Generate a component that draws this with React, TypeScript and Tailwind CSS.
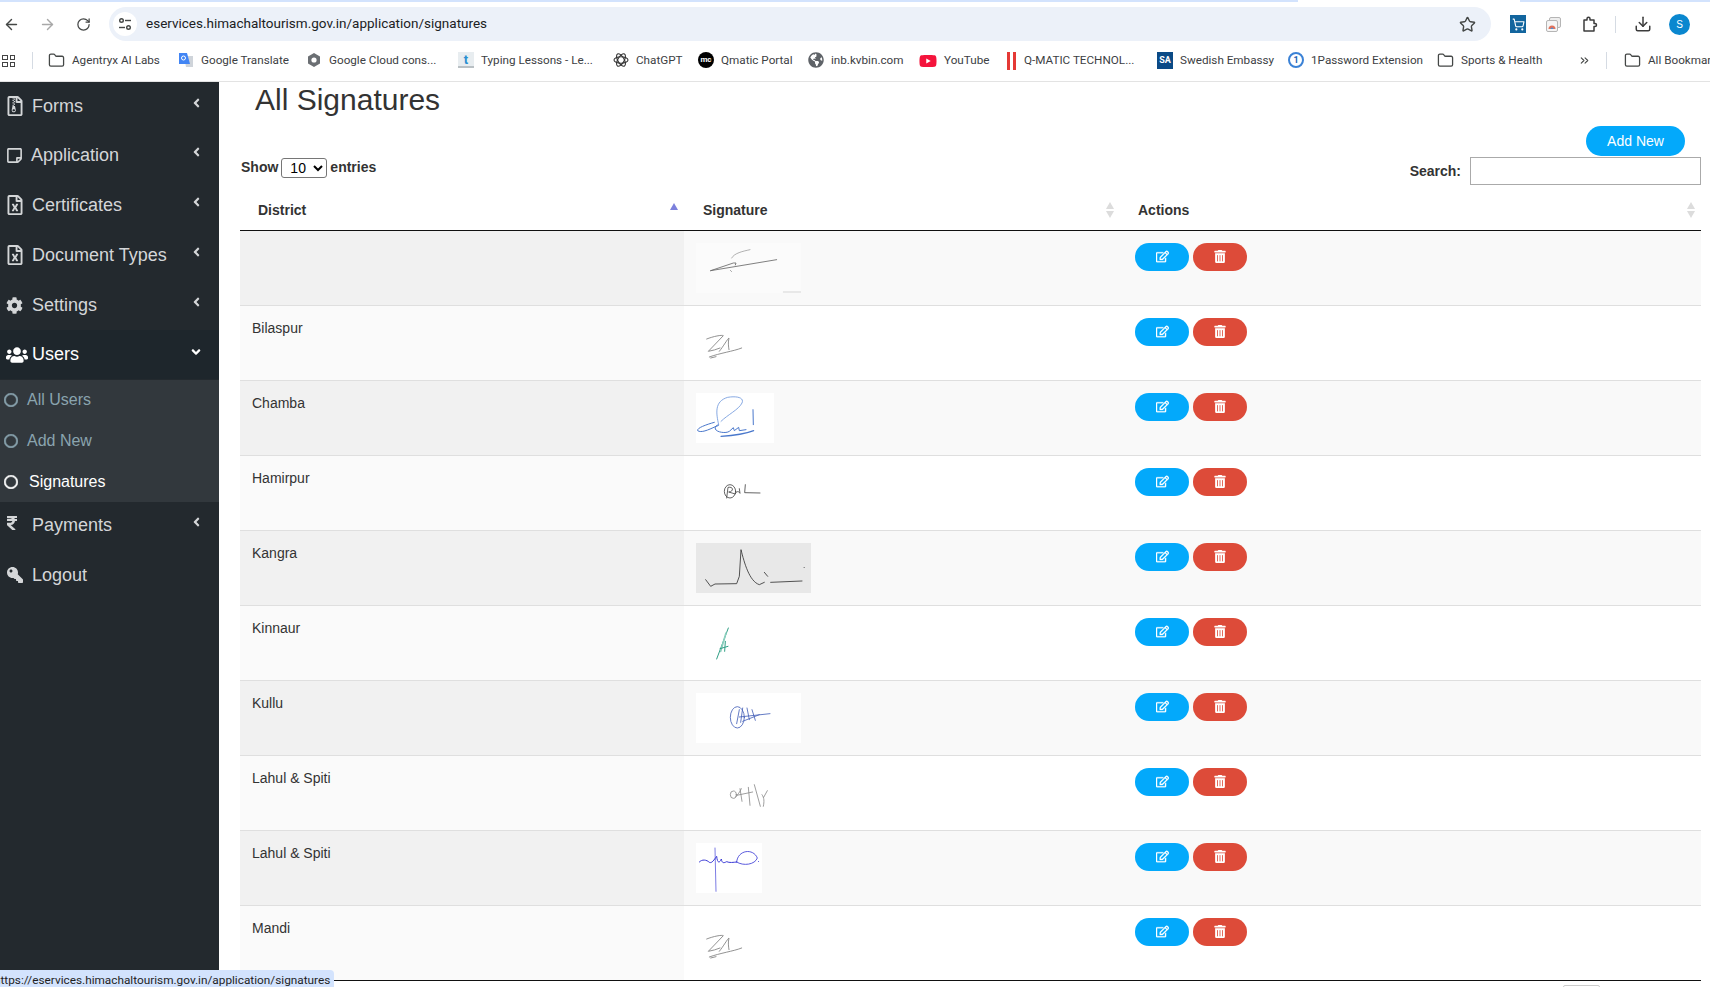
import type { ReactNode } from "react";
import { ArrowLeft, ArrowRight, ChevronsRight, Download, Folder, RotateCw, ShoppingCart, Star } from "lucide-react";
import {
  FaAngleDown,
  FaAngleLeft,
  FaCog,
  FaGlobeAmericas,
  FaKey,
  FaRegCircle,
  FaRegEdit,
  FaRegFileArchive,
  FaRegFileExcel,
  FaRegStickyNote,
  FaRupeeSign,
  FaTrashAlt,
  FaUsers,
  FaYoutube,
} from "react-icons/fa";

const folderIcon = <Folder className="w-[17px] h-[17px] text-[#444746]" strokeWidth={1.8} />;

const bookmarks: { label: string; width: string; icon: ReactNode }[] = [
  { label: "Agentryx AI Labs", width: "w-[130px]", icon: folderIcon },
  {
    label: "Google Translate",
    width: "w-[128px]",
    icon: (
      <svg viewBox="0 0 16 16" className="w-4 h-4">
        <path d="M6 4h9v11H8z" fill="#cfd4da" />
        <path d="M1 1h8l3 11H1z" fill="#4285f4" />
        <circle cx="5.5" cy="6" r="2" fill="none" stroke="#fff" strokeWidth="1" />
      </svg>
    ),
  },
  {
    label: "Google Cloud cons...",
    width: "w-[152px]",
    icon: (
      <svg viewBox="0 0 16 16" className="w-4 h-4">
        <path d="M8 1l6 3.500v7L8 15l-6-3.500v-7z" fill="#6b6f73" />
        <circle cx="8" cy="8" r="2.600" fill="#fff" />
      </svg>
    ),
  },
  {
    label: "Typing Lessons - Le...",
    width: "w-[155px]",
    icon: (
      <span className="w-4 h-4 flex items-center justify-center bg-[#e8edf0] border-b-2 border-[#b9c0c4] text-[#2a8fd0] text-[13px] font-bold leading-none">t</span>
    ),
  },
  {
    label: "ChatGPT",
    width: "w-[85px]",
    icon: (
      <svg viewBox="0 0 16 16" className="w-4 h-4" fill="none" stroke="#333" strokeWidth="1.100">
        <ellipse cx="8" cy="8" rx="7" ry="3.200" />
        <ellipse cx="8" cy="8" rx="7" ry="3.200" transform="rotate(60 8 8)" />
        <ellipse cx="8" cy="8" rx="7" ry="3.200" transform="rotate(120 8 8)" />
      </svg>
    ),
  },
  {
    label: "Qmatic Portal",
    width: "w-[110px]",
    icon: (
      <span className="w-4 h-4 rounded-full bg-black text-white text-[8px] font-bold flex items-center justify-center leading-none">mc</span>
    ),
  },
  { label: "inb.kvbin.com", width: "w-[111px]", icon: <FaGlobeAmericas className="w-4 h-4 text-[#5f6368]" /> },
  { label: "YouTube", width: "w-[86px]", icon: <FaYoutube className="w-[18px] h-[18px] text-[#f4143c]" /> },
  {
    label: "Q-MATIC TECHNOL...",
    width: "w-[152px]",
    icon: (
      <span className="w-3 h-[18px] flex justify-center gap-[3px]">
        <span className="w-[3px] bg-[#e53935]" />
        <span className="w-[3px] bg-[#e53935]" />
      </span>
    ),
  },
  {
    label: "Swedish Embassy",
    width: "w-[131px]",
    icon: <span className="w-4 h-[17px] bg-[#0b4a86] text-white text-[9px] font-bold flex items-center justify-center leading-none">SA</span>,
  },
  {
    label: "1Password Extension",
    width: "w-[149px]",
    icon: (
      <span className="w-4 h-4 rounded-full border-2 border-[#3b82d6] text-[#1a5fb4] text-[9px] font-bold flex items-center justify-center leading-none">1</span>
    ),
  },
  { label: "Sports & Health", width: "w-[141px]", icon: folderIcon },
];

function ChromeBar() {
  return (
    <header className="shrink-0 h-[82px] bg-white border-b border-[#e3e3e3] text-[#1f1f1f]">
      <div className="flex h-[2px] bg-white">
        <div className="w-[1298px] bg-[#d3e3fd]" />
        <div className="w-[222px]" />
        <div className="flex-1 bg-[#d3e3fd]" />
      </div>
      <div className="flex items-center h-[34px] mt-[5px]">
        <ArrowLeft className="w-[17px] h-[17px] ml-[3px] text-[#444746]" />
        <ArrowRight className="w-[17px] h-[17px] ml-[19px] text-[#a8a8a8]" />
        <RotateCw className="w-[15px] h-[15px] ml-[20px] text-[#444746]" />
        <div className="flex items-center flex-1 h-[34px] ml-[18px] bg-[#ecf1f9] rounded-full">
          <div className="w-6 h-6 ml-[4px] rounded-full bg-white flex items-center justify-center">
            <svg viewBox="0 0 14 14" className="w-[14px] h-[14px]" fill="none" stroke="#444746" strokeWidth="1.400">
              <circle cx="3.500" cy="3.500" r="1.800" />
              <path d="M7 3.500h6" />
              <circle cx="10.500" cy="10.500" r="1.800" />
              <path d="M1 10.500h6" />
            </svg>
          </div>
          <span className="ml-[9px] text-[13.500px] leading-none font-['Roboto',sans-serif] text-[#202124]">eservices.himachaltourism.gov.in/application/signatures</span>
          <Star className="w-[17px] h-[17px] ml-auto mr-[15px] text-[#444746]" />
        </div>
        <div className="ml-[19px] w-4 h-[18px] bg-[#12659e] flex items-center justify-center">
          <ShoppingCart className="w-[13px] h-[13px] text-white" />
        </div>
        <svg viewBox="0 0 17 17" className="w-[17px] h-[17px] ml-[19px]">
          <rect x="4.500" y="1.500" width="11" height="10" rx="1.500" fill="#eee" stroke="#b5b5b5" />
          <rect x="1.500" y="4.500" width="11" height="11" rx="1.500" fill="#f5f5f5" stroke="#b5b5b5" />
          <path d="M3.500 13a3.500 3.500 0 0 1 7 0z" fill="#e2725b" />
          <path d="M5.500 13a1.500 1.500 0 0 1 3 0z" fill="#4a90d9" />
        </svg>
        <svg viewBox="0 0 17 17" className="w-[17px] h-[17px] ml-[19px]" fill="none" stroke="#3c3c3c" strokeWidth="1.500" strokeLinejoin="round">
          <path d="M3 4h3V2.800a1.500 1.500 0 0 1 3 0V4h4v3.500h1a1.500 1.500 0 0 1 0 3h-1V15H3z" />
        </svg>
        <div className="w-px h-[17px] ml-[17px] bg-[#d5dbe3]" />
        <Download className="w-[18px] h-[18px] ml-[18px] text-[#3c3c3c]" />
        <div className="w-[21px] h-[21px] ml-[17px] mr-[20px] rounded-full bg-[#0a87cf] text-white text-[10px] flex items-center justify-center">S</div>
      </div>
      <div className="flex items-center h-[33px] mt-[3px] text-[11.700px] text-[#3c4043] overflow-hidden whitespace-nowrap font-['Roboto',sans-serif]">
        <div className="shrink-0 ml-[2px] w-[13px] grid grid-cols-2 gap-[2px]">
          <span className="h-[5px] border border-[#444]" />
          <span className="h-[5px] border border-[#444]" />
          <span className="h-[5px] border border-[#444]" />
          <span className="h-[5px] border border-[#444]" />
        </div>
        <div className="shrink-0 w-px h-[17px] ml-[17px] mr-[15px] bg-[#d5dbe3]" />
        {bookmarks.map((b) => (
          <div key={b.label} className={`${b.width} shrink-0 flex items-center gap-[7px]`}>
            {b.icon}
            <span>{b.label}</span>
          </div>
        ))}
        <ChevronsRight className="w-[13px] h-[13px] shrink-0 text-[#444746]" />
        <div className="w-px h-[17px] shrink-0 ml-[15px] mr-[17px] bg-[#d5dbe3]" />
        <div className="flex items-center gap-[7px] shrink-0">
          {folderIcon}
          <span>All Bookmarks</span>
        </div>
      </div>
    </header>
  );
}

function NavItem({ icon, label, height, gap, open }: { icon: ReactNode; label: string; height: string; gap: string; open?: boolean }) {
  return (
    <div className={`flex items-center ${height} pl-[6px] pr-[16px] ${open ? "bg-[#1e262c] text-white" : "text-[#d4d6d8]"} text-[18px]`}>
      <span className={`w-[17px] flex justify-center ${gap}`}>{icon}</span>
      <span>{label}</span>
      {open ? <FaAngleDown className="ml-auto mb-[6px] w-[14px] h-[14px]" /> : label === "Logout" ? null : <FaAngleLeft className="ml-auto mb-[7px] w-[13px] h-[14px]" />}
    </div>
  );
}

function SubItem({ label, active }: { label: string; active?: boolean }) {
  return (
    <div className={`flex items-center h-[40.670px] pl-[4px] text-[16px] ${active ? "text-white" : "text-[#8aa4af]"}`}>
      <FaRegCircle className="w-[14px] h-[14px] stroke-current stroke-[24]" />
      <span className={active ? "ml-[11px]" : "ml-[9px]"}>{label}</span>
    </div>
  );
}

function Sidebar() {
  return (
    <aside className="w-[219px] shrink-0 bg-[#23292e]">
      <NavItem icon={<FaRegFileArchive className="w-[16px] h-[20px]" />} label="Forms" height="h-[48px]" gap="mr-[9px]" />
      <NavItem icon={<FaRegStickyNote className="w-[17px] h-[17px]" />} label="Application" height="h-[50px]" gap="mr-[8px]" />
      <NavItem icon={<FaRegFileExcel className="w-[16px] h-[20px]" />} label="Certificates" height="h-[50px]" gap="mr-[9px]" />
      <NavItem icon={<FaRegFileExcel className="w-[16px] h-[20px]" />} label="Document Types" height="h-[50px]" gap="mr-[9px]" />
      <NavItem icon={<FaCog className="w-[17px] h-[17px]" />} label="Settings" height="h-[50px]" gap="mr-[9px]" />
      <NavItem icon={<FaUsers className="w-[22px] h-[22px] shrink-0 translate-x-[2px]" />} label="Users" height="h-[49px]" gap="mr-[9px]" open />
      <div className="mt-px bg-[#32383d]">
        <SubItem label="All Users" />
        <SubItem label="Add New" />
        <SubItem label="Signatures" active />
      </div>
      <NavItem icon={<FaRupeeSign className="w-[14px] h-[16px] mb-[6px] -translate-x-[3px]" />} label="Payments" height="h-[48px]" gap="mr-[9px]" />
      <NavItem icon={<FaKey className="w-[16px] h-[16px] -scale-x-100" />} label="Logout" height="h-[51px]" gap="mr-[9px]" />
    </aside>
  );
}

function ZSign() {
  return (
    <svg viewBox="0 0 150 150" className="block w-[50px] h-[50px] blur-[0.3px]" fill="none" stroke="#7c7c7c" strokeWidth="2.500" strokeLinecap="round">
      <path d="M32 63C52 55 78 50 82 53L37 100C50 98 62 94 72 90" />
      <path d="M70 100C82 85 95 62 99 60C96 72 97 85 99 95" />
      <path d="M40 117C72 105 112 100 137 90" />
      <path d="M44 120L60 116" />
    </svg>
  );
}

function Signature({ id }: { id: number }) {
  if (id === 0)
    return (
      <svg viewBox="0 0 315 150" className="block w-[105px] h-[50px] bg-[#fbfbfb] blur-[0.3px]" fill="none" stroke="#666" strokeWidth="2.500" strokeLinecap="round">
        <path d="M44 83L242 50" />
        <path d="M44 83L112 60L120 60L118 66" />
        <path d="M107 45C115 30 140 25 162 20" strokeWidth="1.500" />
        <path d="M104 83L106 85" />
        <path d="M262 147L315 147" stroke="#ccc" />
      </svg>
    );
  if (id === 2)
    return (
      <svg viewBox="0 0 234 150" className="block w-[78px] h-[50px] bg-white blur-[0.3px]" fill="none" stroke="#4a78cc" strokeWidth="3" strokeLinecap="round" strokeLinejoin="round">
        <path d="M68 95C60 60 55 25 95 13C125 8 145 15 138 30C128 50 95 65 75 85" strokeWidth="2.500" stroke="#6f98dc" />
        <path d="M55 88C30 95 2 105 5 113C15 120 35 112 60 100C80 95 55 92 58 108C62 118 90 122 100 115L112 104L115 113L128 103L130 113L150 110" />
        <path d="M171 50L172 95" />
        <path d="M75 130C110 128 150 122 173 113" strokeWidth="3.500" />
      </svg>
    );
  if (id === 3)
    return (
      <svg viewBox="0 0 234 150" className="block w-[78px] h-[50px] blur-[0.3px]" fill="none" stroke="#444" strokeWidth="2.500" strokeLinecap="round">
        <ellipse cx="102" cy="70" rx="17" ry="20" />
        <path d="M92 90L96 58C115 55 112 72 98 72L118 78C120 70 128 68 132 76L130 62" />
        <path d="M148 50L146 74L192 75" />
      </svg>
    );
  if (id === 4)
    return (
      <svg viewBox="0 0 345 150" className="block w-[115px] h-[50px] bg-[#e8e8e8] blur-[0.3px]" fill="none" stroke="#333" strokeWidth="2.500" strokeLinecap="round">
        <path d="M29 110L44 130L57 123L122 122L130 100L135 20C145 60 160 115 190 125L205 118" />
        <path d="M205 88L215 100" />
        <path d="M224 118L318 114" />
        <path d="M324 73L325 74" />
      </svg>
    );
  if (id === 5)
    return (
      <svg viewBox="0 0 150 150" className="block w-[50px] h-[50px] blur-[0.3px]" fill="none" stroke="#2f9e84" strokeWidth="3" strokeLinecap="round">
        <path d="M97 30L62 123" />
        <path d="M90 45L74 100" strokeWidth="5" stroke="#8ccfbe" />
        <path d="M72 92L96 85" />
        <path d="M88 70L86 100" />
      </svg>
    );
  if (id === 6)
    return (
      <svg viewBox="0 0 315 150" className="block w-[105px] h-[50px] bg-white blur-[0.3px]" fill="none" stroke="#4560b8" strokeWidth="2.500" strokeLinecap="round">
        <ellipse cx="124" cy="73" rx="21" ry="32" />
        <path d="M130 72L222 62" />
        <path d="M130 50L122 92" />
        <path d="M140 45L134 88" />
        <path d="M153 45L160 80" />
        <path d="M168 50L178 82" />
        <path d="M140 85L190 65" />
      </svg>
    );
  if (id === 7)
    return (
      <svg viewBox="0 0 234 150" className="block w-[78px] h-[50px] blur-[0.3px]" fill="none" stroke="#8a8a8a" strokeWidth="2.500" strokeLinecap="round">
        <ellipse cx="112" cy="80" rx="9" ry="11" />
        <path d="M118 88C125 80 132 72 136 62" />
        <path d="M132 62L138 100" />
        <path d="M122 82L170 72" />
        <path d="M157 58L162 112" />
        <path d="M175 50L193 115" />
        <path d="M198 80C205 90 205 100 202 115" />
        <path d="M203 88L214 68" />
      </svg>
    );
  if (id === 8)
    return (
      <svg viewBox="0 0 198 150" className="block w-[66px] h-[50px] bg-white blur-[0.3px]" fill="none" stroke="#3a3ad6" strokeWidth="2.500" strokeLinecap="round" strokeLinejoin="round">
        <path d="M57 15L60 145" strokeWidth="2" />
        <path d="M10 57C18 48 32 50 40 58C48 62 54 50 62 40C64 60 70 62 76 48C78 62 84 60 92 56C100 60 112 58 122 57" strokeWidth="3" />
        <path d="M122 57C125 20 172 15 184 45C177 65 142 70 122 57" />
        <path d="M187 55L188 56" />
      </svg>
    );
  return <ZSign />;
}

const rows = ["", "Bilaspur", "Chamba", "Hamirpur", "Kangra", "Kinnaur", "Kullu", "Lahul & Spiti", "Lahul & Spiti", "Mandi"];

function SortArrows() {
  return (
    <span className="flex flex-col gap-[2px]">
      <span className="w-0 h-0 border-x-[4px] border-x-transparent border-b-[7px] border-b-[#dcdcdc]" />
      <span className="w-0 h-0 border-x-[4px] border-x-transparent border-t-[7px] border-t-[#dcdcdc]" />
    </span>
  );
}

function SignatureTable() {
  return (
    <table className="w-[1461px] table-fixed border-separate border-spacing-0 text-[14px] text-[#333]">
      <colgroup>
        <col className="w-[444px]" />
        <col className="w-[441px]" />
        <col className="w-[576px]" />
      </colgroup>
      <thead>
        <tr>
          <th className="h-[41px] pl-[18px] pr-[5px] text-left font-bold border-b border-[#111]">
            <div className="flex items-center justify-between">
              <span>District</span>
              <span className="w-0 h-0 mb-[8px] mr-px border-x-[4.500px] border-x-transparent border-b-[7px] border-b-[#7c80dc]" />
            </div>
          </th>
          <th className="h-[41px] pl-[19px] pr-[11px] text-left font-bold border-b border-[#111]">
            <div className="flex items-center justify-between">
              <span>Signature</span>
              <SortArrows />
            </div>
          </th>
          <th className="h-[41px] pl-[13px] pr-[6px] text-left font-bold border-b border-[#111]">
            <div className="flex items-center justify-between">
              <span>Actions</span>
              <SortArrows />
            </div>
          </th>
        </tr>
      </thead>
      <tbody>
        {rows.map((name, i) => {
          const odd = i % 2 === 0;
          const line = i === rows.length - 1 ? "border-[#111]" : "border-[#dfdfdf]";
          return (
            <tr key={i} className="h-[75px]">
              <td className={`align-top pl-[12px] pt-[12px] leading-5 border-b ${line} ${odd ? "bg-[#f1f1f1]" : "bg-[#fafafa]"}`}>{name}</td>
              <td className={`align-top pl-[12px] pt-[12px] border-b ${line} ${odd ? "bg-[#f9f9f9]" : "bg-white"}`}>
                <Signature id={i} />
              </td>
              <td className={`align-top pl-[10px] pt-[12px] border-b ${line} ${odd ? "bg-[#f9f9f9]" : "bg-white"}`}>
                <div className="flex gap-1">
                  <button className="w-[54px] h-[28px] rounded-full bg-[#03a9fb] text-white flex items-center justify-center">
                    <FaRegEdit className="w-[13px] h-[13px] -mt-[2px] stroke-current stroke-[12]" />
                  </button>
                  <button className="w-[54px] h-[28px] rounded-full bg-[#dd4b39] text-white flex items-center justify-center">
                    <FaTrashAlt className="w-[12px] h-[13px] -mt-[2px]" />
                  </button>
                </div>
              </td>
            </tr>
          );
        })}
      </tbody>
    </table>
  );
}

export default function App() {
  return (
    <div className="relative w-[1710px] h-[987px] overflow-hidden flex flex-col bg-white font-['Liberation_Sans',Arial,sans-serif]">
      <ChromeBar />
      <div className="flex flex-1 min-h-0">
        <Sidebar />
        <main className="flex-1 min-w-0 pl-[21px] text-[#333]">
          <h1 className="ml-[15px] text-[30px] leading-[35px] font-normal">All Signatures</h1>
          <div className="flex justify-end mt-[9px] mr-[25px]">
            <button className="w-[99px] h-[30px] rounded-full bg-[#03a9fb] text-white text-[14px]">Add New</button>
          </div>
          <div className="flex justify-between items-start mt-px w-[1461px] h-[33px] text-[14px] font-bold">
            <div className="flex items-center gap-[3px] ml-px h-[21px]">
              <span>Show</span>
              <select defaultValue="10" className="w-[46px] h-[20px] pl-[4px] border border-[#767676] rounded-[3px] font-normal text-black bg-white">
                <option value="10">10</option>
                <option value="25">25</option>
              </select>
              <span>entries</span>
            </div>
            <div className="flex items-center gap-[9px]">
              <span>Search:</span>
              <input className="w-[231px] h-[28px] border border-[#aaa] bg-white" />
            </div>
          </div>
          <SignatureTable />
          <div className="flex justify-end mt-1 w-[1461px] pr-[101px]">
            <div className="w-[37px] h-8 border border-[#ccc] rounded-[2px]" />
          </div>
        </main>
      </div>
      <div className="absolute left-0 bottom-0 w-[334px] h-[17px] overflow-hidden bg-[#d3e3fd] rounded-tr-[4px] text-[11.800px] leading-[20px] text-[#1f1f1f] font-['Roboto',sans-serif] whitespace-nowrap">
        <span className="block -ml-[6px]">https://eservices.himachaltourism.gov.in/application/signatures</span>
      </div>
    </div>
  );
}
